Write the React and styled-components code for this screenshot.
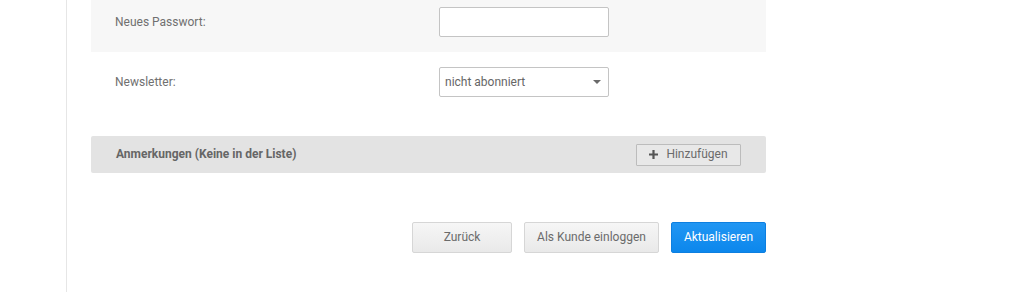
import styled, { createGlobalStyle } from "styled-components";

const Global = createGlobalStyle`
  body {
    margin: 0;
    background: #fff;
    font-family: Roboto, "Liberation Sans", sans-serif;
    font-size: 12px;
    color: #6b6b6b;
  }
`;

const Page = styled.div`
  height: 292px;
  overflow: hidden;
  padding-left: 66px;
`;

const Main = styled.div`
  display: flow-root;
  border-left: 1px solid #e6e6e6;
  height: 100%;
  padding-left: 24px;
`;

const Form = styled.div`
  width: 675px;
  margin-top: -8px;
`;

const Row = styled.div`
  display: flex;
  align-items: center;
  height: 60px;
  padding-left: 24px;
  background: ${(p) => (p.$shaded ? "#f7f7f7" : "#fff")};
`;

const Label = styled.div`
  width: 324px;
  color: #707070;
  margin-top: -1px;
`;

const Input = styled.input`
  box-sizing: border-box;
  width: 170px;
  height: 30px;
  border: 1px solid #c4c4c4;
  border-radius: 2px;
  background: #fff;
  outline: none;
`;

const SelectBox = styled.div`
  box-sizing: border-box;
  width: 170px;
  height: 30px;
  border: 1px solid #c4c4c4;
  border-radius: 2px;
  background: #fff;
  display: flex;
  align-items: center;
  justify-content: space-between;
  padding: 0 6px 1px 5px;
  color: #666;
`;

const Caret = styled.span`
  width: 0;
  height: 0;
  border-left: 4px solid transparent;
  border-right: 4px solid transparent;
  border-top: 4px solid #6a6a6a;
  margin: 1px 1px 0 0;
`;

const Bar = styled.div`
  margin-top: 24px;
  height: 37px;
  box-sizing: border-box;
  background: #e3e3e3;
  border-radius: 2px;
  display: flex;
  align-items: center;
  justify-content: space-between;
  padding: 0 25px;
`;

const BarTitle = styled.div`
  font-weight: 700;
  color: #666;
  margin-top: -1px;
`;

const SmallButton = styled.button`
  box-sizing: border-box;
  height: 22px;
  width: 105px;
  border: 1px solid #bcbcbc;
  border-radius: 1px;
  background: #e8e8e8;
  font-family: inherit;
  font-size: 12px;
  color: #6b6b6b;
  display: flex;
  align-items: center;
  justify-content: center;
  gap: 8px;
  padding: 0 0 1px;
`;

const Actions = styled.div`
  margin-top: 49px;
  display: flex;
  justify-content: flex-end;
  gap: 12px;
`;

const Button = styled.button`
  box-sizing: border-box;
  height: 31px;
  width: ${(p) => p.$w}px;
  border-radius: 2px;
  font-family: inherit;
  font-size: 12px;
  padding: 0 0 2px;
  border: 1px solid ${(p) => (p.$primary ? "#0d7fe0" : "#d6d6d6")};
  background: ${(p) =>
    p.$primary
      ? "linear-gradient(#2196f3, #0c87ec)"
      : "linear-gradient(#f6f6f6, #e9e9e9)"};
  color: ${(p) => (p.$primary ? "#fff" : "#6b6b6b")};
`;

const Plus = () => (
  <svg width="9" height="9" viewBox="0 0 9 9">
    <path d="M3.4 0h2.2v3.4H9v2.2H5.6V9H3.4V5.6H0V3.4h3.4z" fill="#555" />
  </svg>
);

export default function App() {
  return (
    <Page>
      <Global />
      <Main>
        <Form>
          <Row $shaded>
            <Label>Neues Passwort:</Label>
            <Input type="password" />
          </Row>
          <Row>
            <Label>Newsletter:</Label>
            <SelectBox>
              nicht abonniert
              <Caret />
            </SelectBox>
          </Row>
          <Bar>
            <BarTitle>Anmerkungen (Keine in der Liste)</BarTitle>
            <SmallButton>
              <Plus />
              Hinzufügen
            </SmallButton>
          </Bar>
          <Actions>
            <Button $w={100}>Zurück</Button>
            <Button $w={135}>Als Kunde einloggen</Button>
            <Button $w={95} $primary>
              Aktualisieren
            </Button>
          </Actions>
        </Form>
      </Main>
    </Page>
  );
}
